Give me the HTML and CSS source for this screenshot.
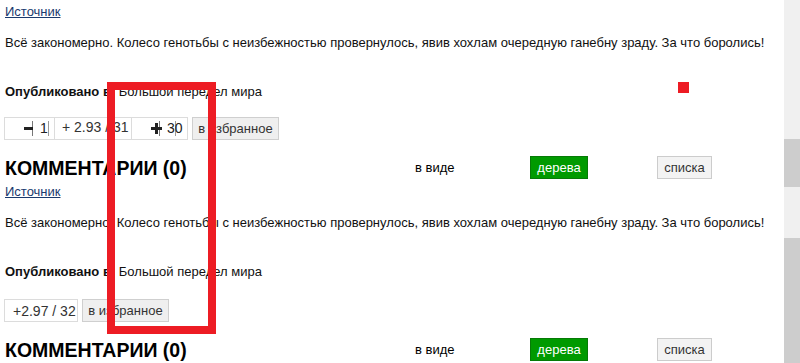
FILE: index.html
```html
<!DOCTYPE html>
<html lang="ru">
<head>
<meta charset="utf-8">
<title>Комментарии</title>
<link rel="stylesheet" href="styles.css">
</head>
<body>
<div class="page">
  <main class="content">
    <section class="post">
      <div class="source"><a href="#">Источник</a></div>
      <p class="text">Всё закономерно. Колесо генотьбы с неизбежностью провернулось, явив хохлам очередную ганебну зраду. За что боролись!</p>
      <p class="published"><b>Опубликовано в:</b> Большой передел мира</p>
      <div class="votes">
        <div class="vbox vbox-minus">
          <span class="vicon"><span class="minus"></span></span>
          <span class="vnum">1</span>
        </div>
        <div class="vbox vbox-rating">+ 2.93 / 31</div>
        <div class="vbox vbox-plus">
          <span class="vicon"><span class="plus"></span></span>
          <span class="vnum">30</span>
        </div>
        <button class="fav">в избранное</button>
      </div>
      <div class="comments">
        <h2 class="ctitle">КОММЕНТАРИИ (0)</h2>
        <span class="view">в виде</span>
        <button class="btn btn-tree">дерева</button>
        <button class="btn btn-list">списка</button>
      </div>
    </section>
    <section class="post">
      <div class="source"><a href="#">Источник</a></div>
      <p class="text">Всё закономерно. Колесо генотьбы с неизбежностью провернулось, явив хохлам очередную ганебну зраду. За что боролись!</p>
      <p class="published"><b>Опубликовано в:</b> Большой передел мира</p>
      <div class="votes votes-alt">
        <div class="vbox vbox-total">+2.97 / 32</div>
        <button class="fav">в избранное</button>
      </div>
      <div class="comments">
        <h2 class="ctitle">КОММЕНТАРИИ (0)</h2>
        <span class="view">в виде</span>
        <button class="btn btn-tree">дерева</button>
        <button class="btn btn-list">списка</button>
      </div>
    </section>
  </main>
  <div class="scrollbar">
    <div class="seg seg-a"></div>
    <div class="seg seg-b"></div>
    <div class="seg seg-c"></div>
    <div class="seg seg-d"></div>
  </div>
  <div class="mark-rect"></div>
  <div class="mark-dot"></div>
</div>
</body>
</html>
```

FILE: styles.css
```css
* { box-sizing: border-box; }
html, body { margin: 0; padding: 0; background: #fff; }
body {
  font-family: "Liberation Sans", Arial, sans-serif;
  font-size: 13px;
  line-height: 16px;
  color: #111;
}
.page {
  position: relative;
  display: flex;
  width: 800px;
  height: 363px;
  overflow: hidden;
}
.content {
  flex: 0 0 784px;
  overflow: hidden;
}
.post {
  padding: 4px 0 1px 0;
}
.source {
  height: 16px;
  padding-left: 5px;
}
.source a {
  color: #1a3a6e;
  text-decoration: underline;
}
.text {
  margin: 15px 0 0 0;
  padding-left: 5px;
  white-space: nowrap;
  color: #111;
}
.published {
  margin: 33px 0 0 0;
  padding-left: 5px;
  color: #111;
}
.published b { font-weight: bold; }

.votes {
  display: flex;
  align-items: stretch;
  margin-top: 17px;
  height: 23px;
  padding-left: 4px;
}
.votes-alt { margin-top: 19px; }
.vbox {
  display: flex;
  align-items: center;
  border: 1px solid #dcdcdc;
  background: #fff;
  color: #333;
  font-size: 14px;
  white-space: nowrap;
}
.vbox + .vbox { margin-left: -1px; }
.vbox-minus { width: 51px; }
.vbox-rating { width: 78px; padding-left: 7px; padding-bottom: 3px; color: #333; }
.vbox-plus { width: 57px; }
.vbox-total { width: 74px; padding-left: 8px; font-size: 14px; color: #333; }
.vicon {
  display: flex;
  align-items: center;
  justify-content: flex-end;
  width: 28px;
  height: 15px;
  border-right: 1px solid #777;
  position: relative;
}
.minus {
  display: block;
  width: 9px;
  height: 3px;
  background: #222;
  margin-right: -1px;
}
.plus {
  display: block;
  position: relative;
  width: 11px;
  height: 11px;
  margin-right: -3px;
}
.plus::before, .plus::after {
  content: "";
  position: absolute;
  background: #222;
}
.plus::before { left: 0; top: 4px; width: 11px; height: 3px; }
.plus::after { left: 4px; top: 0; width: 3px; height: 11px; }
.vnum {
  width: 16px;
  height: 15px;
  line-height: 15px;
  padding-left: 7px;
  border-right: 1px solid #999;
  white-space: nowrap;
  overflow: visible;
  font-size: 14px;
  color: #222;
}
.fav {
  margin-left: 4px;
  width: 87px;
  height: 23px;
  padding: 0;
  font-family: inherit;
  font-size: 13px;
  color: #333;
  background: #efefef;
  border: 1px solid #cfcfcf;
  border-radius: 0;
}
.votes-alt .fav { margin-left: 4px; }

.comments {
  display: flex;
  align-items: center;
  margin-top: 16px;
  height: 23px;
  padding-left: 5px;
}
.ctitle {
  margin: 0;
  width: 410px;
  font-size: 19.5px;
  font-weight: bold;
  line-height: 23px;
  color: #000;
  padding-top: 1px;
}
.view {
  width: 115px;
  color: #000;
}
.btn {
  height: 23px;
  padding: 0;
  font-family: inherit;
  font-size: 13px;
  border-radius: 0;
}
.btn-tree {
  width: 58px;
  background: #009a00;
  border: 1px solid #067a06;
  color: #fff;
  margin-right: 69px;
}
.btn-list {
  width: 55px;
  background: #f3f3f3;
  border: 1px solid #cccccc;
  color: #333;
}

.scrollbar {
  flex: 0 0 16px;
  display: flex;
  flex-direction: column;
}
.seg-a { height: 139px; background: #f0f0f0; }
.seg-b { height: 48px; background: #cdcdcd; }
.seg-c { height: 51px; background: #f0f0f0; }
.seg-d { flex: 1; background: #cdcdcd; }

.mark-rect {
  position: absolute;
  left: 107px;
  top: 82px;
  width: 109px;
  height: 252px;
  border: 8px solid #ed1c24;
}
.mark-dot {
  position: absolute;
  left: 678px;
  top: 82px;
  width: 11px;
  height: 11px;
  background: #ed1c24;
}
```
